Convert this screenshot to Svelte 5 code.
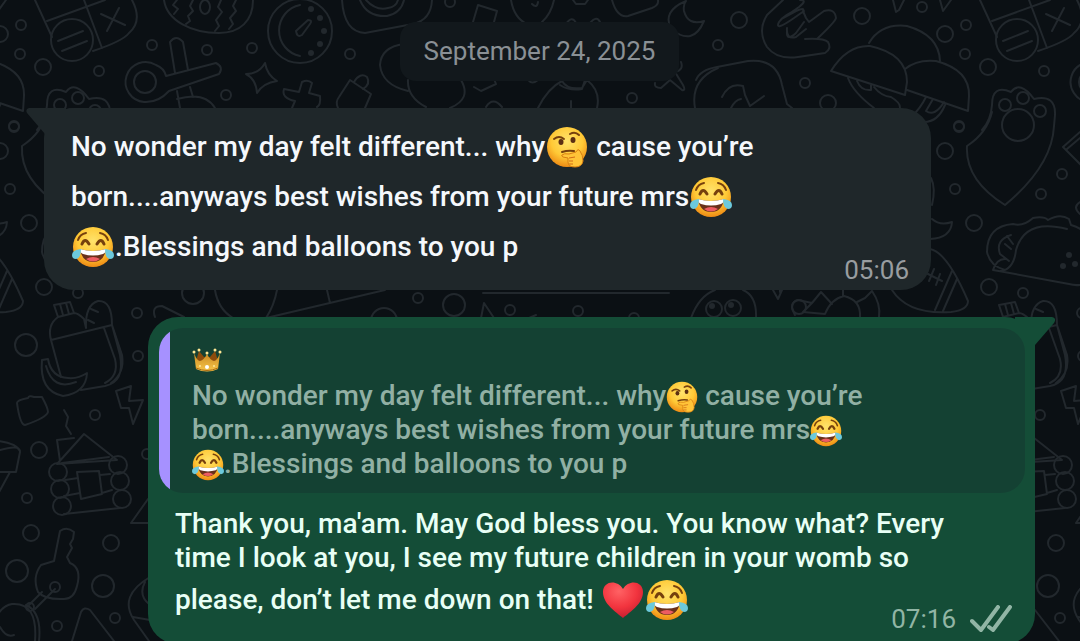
<script>
const received = {
  lines: ['No wonder my day felt different... why🤔 cause you’re', 'born....anyways best wishes from your future mrs😂', '😂.Blessings and balloons to you p'],
  time: '05:06',
}

const reply = {
  author: '👑',
  lines: [
    "Thank you, ma'am. May God bless you. You know what? Every",
    'time I look at you, I see my future children in your womb so',
    'please, don’t let me down on that! ❤😂',
  ],
  time: '07:16',
}

const dots = [
  [21, 25, 5], [0, 34, 8], [20, 54, 5], [43, 67, 8], [99, 71, 5], [152, 45, 5], [207, 50, 5],
  [252, 48, 5], [226, 95, 5], [350, 54, 5], [14, 126, 5], [450, 2, 5], [632, 98, 5], [718, 45, 5],
  [739, 20, 8], [862, 16, 8], [922, 7, 5], [805, 83, 5], [828, 103, 8], [959, 127, 5], [945, 151, 8],
  [955, 189, 5], [974, 223, 8], [117, 174, 5], [96, 194, 5], [989, 287, 8], [1023, 293, 5],
  [193, 293, 11], [137, 313, 5], [138, 356, 5], [26, 345, 11], [95, 415, 5], [39, 450, 8],
  [147, 454, 5], [27, 498, 5], [31, 533, 8], [111, 543, 8], [17, 571, 11], [103, 586, 11],
  [57, 626, 5], [115, 618, 5], [418, 298, 5], [454, 305, 11], [384, 321, 13], [510, 310, 5],
  [578, 311, 5], [634, 318, 5], [799, 307, 7], [714, 309, 8], [733, 308, 8],
]

// keeps the emoji as separate parts so they can be drawn
function split(line) {
  return line.split(/(🤔|😂|❤|👑)/u).filter(Boolean)
}
</script>

{#snippet emoji(name)}
  {#if name === '😂'}
    <svg class="emoji" viewBox="0 0 42 42" role="img" aria-label={name}>
      <circle cx="21" cy="21" r="20" fill="url(#face)" />
      <path d="M6 14Q8 8 14 7M28 7Q34 8 36 14" class="brow" />
      <path d="M10 18Q13 11 17 18M25 18Q29 11 32 18" class="brow wide" />
      <path d="M8 23Q21 27 34 23Q32 36 21 36T8 23Z" fill="#68301a" />
      <path d="M8 23Q21 27 34 23Q34 27 31 28Q21 31 11 28Q8 27 8 23Z" fill="#fff" />
      <path d="M14 33Q21 29 28 33Q21 38 14 33Z" fill="#ed5c62" />
      <path d="M9 23Q0 24 0 29Q0 33 4 33Q9 32 9 23ZM33 23Q42 24 42 29Q42 33 38 33Q33 32 33 23Z" fill="#6cc9dc" />
    </svg>
  {:else if name === '🤔'}
    <svg class="emoji" viewBox="0 0 42 42" role="img" aria-label={name}>
      <circle cx="21" cy="21" r="20" fill="url(#face)" />
      <path d="M8 13Q13 9 18 13M24 8Q29 5 33 9" class="brow" />
      <ellipse cx="15" cy="16" rx="2.5" ry="3" fill="#5b2e12" />
      <ellipse cx="27" cy="14" rx="2.5" ry="3" fill="#5b2e12" />
      <path d="M16 26Q22 24 28 25" class="brow" />
      <path
        d="M16 29Q18 27 23 28L30 26Q32 22 34 25Q37 29 37 35Q36 41 29 41Q22 41 22 36V32L17 31Q15 30 16 29Z"
        fill="#ffc438"
        stroke="#d77e12"
      />
      <path d="M23 32L29 31M23 35H27M23 38H27" stroke="#d06b17" />
    </svg>
  {:else if name === '❤'}
    <svg class="emoji" viewBox="0 0 42 42" role="img" aria-label={name}>
      <path d="M21 39C14 33 1 25 1 13C1 2 15 0 21 10C27 0 41 2 41 13C41 25 28 33 21 39Z" fill="url(#love)" />
    </svg>
  {:else}
    <svg class="emoji crown" viewBox="0 0 30 26" role="img" aria-label={name}>
      <path d="M4 14L7 4L12 10H18L23 4L26 14Z" fill="#8c4c0c" />
      <path d="M2 6Q5 14 8 14Q12 13 15 7Q18 13 22 14Q25 14 28 6L26 22Q15 27 4 22Z" fill="url(#gold)" />
      <path d="M4 21Q15 26 26 21" fill="none" stroke="#a96c16" />
      <g fill="#ffe794">
        <circle cx="2" cy="5" r="1.5" />
        <circle cx="7" cy="3" r="1.5" />
        <circle cx="15" cy="6" r="1.5" />
        <circle cx="23" cy="3" r="1.5" />
        <circle cx="28" cy="5" r="1.5" />
        <circle cx="8" cy="19" r="1" />
        <circle cx="22" cy="19" r="1" />
      </g>
      <circle cx="15" cy="20" r="2" fill="#fff" />
    </svg>
  {/if}
{/snippet}

{#snippet text(lines)}
  {#each lines as line}
    <span class="line">{#each split(line) as part}{#if /^[🤔😂❤👑]$/u.test(part)}{@render emoji(part)}{:else}{part}{/if}{/each}</span>
  {/each}
{/snippet}

<main class="chat">
  <svg class="wallpaper" aria-hidden="true">
    <defs>
      <radialGradient id="face" cx="50%" cy="35%" r="65%">
        <stop offset="0" stop-color="#ffe36c" />
        <stop offset="0.6" stop-color="#ffc936" />
        <stop offset="1" stop-color="#ee8b14" />
      </radialGradient>
      <radialGradient id="love" cx="40%" cy="25%" r="75%">
        <stop offset="0" stop-color="#ff6264" />
        <stop offset="0.6" stop-color="#f2343e" />
        <stop offset="1" stop-color="#c91f31" />
      </radialGradient>
      <linearGradient id="gold" x2="0" y2="1">
        <stop offset="0" stop-color="#c98a22" />
        <stop offset="1" stop-color="#f8c64a" />
      </linearGradient>
      <g id="doodles">
        {#each dots as [cx, cy, r]}
          <circle {cx} {cy} {r} />
        {/each}
        <!-- game card -->
        <path d="M35 0L52 37M47 21L105 0M84 0L102 48M132 0Q143 21 129 33Q123 41 93 51M101 14L125 25M119 8L107 31" />
        <circle cx="72" cy="40" r="21" />
        <path d="M58 41L83 31M62 51L87 41" />
        <!-- egg -->
        <path d="M164 0C167 21 192 33 219 33C240 33 253 21 253 0" />
        <path d="M177 0L173 5L178 9L174 14M193 0L190 6L193 11L188 16L190 21L186 24M221 0L218 7L222 12L216 20L219 26L215 31M236 0L233 6L236 11L230 18L233 24L229 29" />
        <ellipse cx="205" cy="7" rx="5" ry="7" />
        <!-- timer -->
        <circle cx="300" cy="31" r="32" />
        <path d="M300 5A26 26 0 0 0 300 56M296 31L308 20Q313 20 310 24L302 35Q297 38 296 31" />
        <g class="solid">
          <circle cx="311" cy="9" r="3" />
          <circle cx="320" cy="18" r="3" />
          <circle cx="324" cy="31" r="3" />
          <circle cx="320" cy="44" r="3" />
          <circle cx="311" cy="53" r="3" />
        </g>
        <!-- keys and stars -->
        <path d="M166 76L216 63Q224 67 219 74L169 91Q158 103 144 102A20 20 0 1 1 156 65Q164 68 166 76M175 73L170 42Q176 34 183 42L188 70M177 91L180 108M190 87L193 97M177 99Q205 91 215 108" />
        <circle cx="145" cy="82" r="11" />
        <path d="M265 63Q267 75 277 81Q263 83 257 93Q256 79 246 74Q259 74 265 63Z" />
        <path d="M302 82Q308 79 312 83L309 93L320 96Q321 105 317 107M292 108L295 101Q281 98 284 89L299 92L302 82M338 108Q335 102 339 97L350 80L371 94L365 108M354 82Q360 72 367 77Q371 84 363 89" />
        <!-- camera, balloon and moon -->
        <path d="M342 0Q344 32 365 33L413 24Q431 20 432 0M360 0Q367 17 387 16Q401 13 404 0M366 0Q376 11 388 8Q396 7 398 0M473 22L478 5L497 11L494 22M511 0Q514 18 527 24M554 0Q551 14 542 22M532 4Q537 9 538 2M573 0L576 4H585L588 0M566 24Q572 15 576 23M590 23Q597 15 600 22" />
        <path d="M612 0Q617 18 628 16L652 8Q659 5 658 0M686 1Q662 11 671 29Q693 47 704 21Q688 26 684 11Q683 4 686 1M404 44Q381 47 380 65Q382 85 408 91M408 80Q407 97 426 107M461 80Q472 99 450 108M474 87L481 91L496 84L494 79M538 108Q548 88 562 81Q567 90 582 88L587 80Q601 91 597 108M560 85Q569 91 582 89L585 80M571 101V108M655 83Q654 88 661 88L670 80L682 90Q686 91 683 85L675 72Q684 70 681 62M695 108Q690 80 718 68" />
        <path d="M486 107Q493 96 502 107M528 80Q532 85 538 80" />
        <!-- hand -->
        <path d="M783 0L767 15Q757 31 767 47Q777 60 798 57L825 53Q832 49 828 42Q824 38 805 39M783 18L799 7Q808 0 800 0M783 18L796 11Q805 7 803 11L806 18L809 22L824 11Q835 8 836 18Q835 22 817 39M804 11L794 18Q774 32 779 22Q785 14 796 11M804 22L796 33Q786 42 787 31M806 29L796 37Q786 40 787 28" />
        <path d="M893 0L896 12L899 10L904 0M940 0L943 11L951 0M696 80Q700 70 717 67L748 61Q777 58 782 85L787 104L792 108M722 97Q729 82 743 86L745 95L750 106L764 96M731 108Q735 100 741 99" />
        <!-- mushrooms -->
        <path d="M869 43Q881 23 907 26Q939 35 940 61M831 71Q847 45 870 46Q907 54 907 82L905 95ZM905 69Q917 59 936 61Q970 70 969 96L968 111L907 90M848 78Q853 92 874 108M857 81Q861 91 871 90V85M874 87Q881 96 891 97Q901 103 900 108M926 97Q920 109 912 116M933 99L926 111Q935 117 944 102M945 105Q938 122 924 122" />
        <!-- paw -->
        <path d="M37 130Q46 120 47 105Q47 84 66 92Q75 80 89 99Q111 94 110 115L109 126Q107 166 60 205Q20 180 22 146Q42 133 47 112" />
        <circle cx="60" cy="105" r="6" />
        <circle cx="78" cy="98" r="6" />
        <circle cx="95" cy="111" r="6" />
        <circle cx="73" cy="125" r="16" />
        <path d="M135 132L118 147L137 166M135 138L122 149M135 202Q127 207 135 214" />
        <!-- taco -->
        <path d="M60 270Q45 266 42 252Q42 226 68 224Q78 227 88 218Q99 216 103 220Q115 213 124 219L126 225Q142 229 148 246Q154 269 142 282Q135 287 124 284L48 270M56 271Q69 269 71 250Q80 218 122 229M66 235Q50 240 55 254L64 261M48 270Q52 258 61 259M60 244L66 249M62 236L68 244" />
        <g class="solid">
          <circle cx="118" cy="266" r="3" />
          <circle cx="124" cy="255" r="3" />
          <circle cx="130" cy="264" r="3" />
        </g>
        <path d="M931 178Q936 188 932 205M932 219Q940 226 952 222Q951 238 930 239" />
        <!-- football -->
        <path d="M930 249Q947 252 968 301Q968 310 951 312Q908 315 892 290M952 271L935 310M957 279L943 311M926 273L942 281M934 269L929 281M940 274L936 285" />
        <!-- beetle -->
        <path d="M795 315Q788 303 798 300L812 303L803 312L825 314Q831 299 844 296Q861 300 860 317M812 303L821 292L832 304M843 290V296M865 298L872 291Q881 304 879 317M865 298L857 302M780 290V292" />
        <!-- shopping bag -->
        <path d="M54 305L70 302L74 313L58 317ZM60 304L63 315M66 303L69 314M58 317Q47 325 51 340L61 377M51 340L112 325M86 328L84 319Q78 313 74 313M86 328Q85 305 98 301Q112 300 112 325L120 355Q125 382 105 386L81 390M104 328L115 359Q119 376 105 383M112 325L122 355Q125 373 111 383M91 309L98 312M88 320L94 323" />
        <path d="M42 360L48 359Q51 377 68 378Q78 379 87 373Q86 393 63 396Q39 391 42 360M46 366Q53 391 76 382" />
        <path d="M17 403Q17 400 28 398Q29 395 34 397L42 397Q48 408 48 412Q46 418 25 425Q20 425 17 403ZM64 410L68 417L66 426L71 434M116 391L131 386L129 401L143 400L133 424L129 408H121Z" />
        <!-- cabin -->
        <path d="M60 461L57 440L74 438M57 464L84 434L117 460ZM62 463L109 457M65 480L78 478M64 496L80 493M100 475L110 474M102 493L112 490M77 472L99 471L102 494L81 499ZM64 514L120 508" />
        <circle cx="58" cy="472" r="9" />
        <circle cx="60" cy="489" r="9" />
        <circle cx="62" cy="506" r="9" />
        <circle cx="118" cy="465" r="9" />
        <circle cx="120" cy="481" r="9" />
        <circle cx="122" cy="499" r="9" />
        <path d="M-20 450H0Q20 444 20 452L16 472H-20M10 472L-2 494M-20 440Q15 440 20 451M148 499L131 523H150" />
        <!-- car key -->
        <path d="M54 561L60 531Q67 526 74 532L73 539L70 544L72 548L67 557L70 563Q82 568 77 586Q74 599 64 599Q45 600 38 592Q32 577 41 565ZM42 592L28 606M55 589L35 609" />
        <circle cx="55" cy="587" r="5" />
        <circle cx="30" cy="607" r="4" />
        <path d="M-9 641Q-6 607 12 604Q38 602 35 641M26 605Q42 612 39 641M0 627Q6 638 14 635M72 641L81 612Q84 606 90 610L114 641M150 577Q118 596 134 620L149 641M145 582Q138 595 149 604M133 617L150 620" />
        <!-- shapes showing between the messages -->
        <path d="M215 290Q218 309 233 318M277 290Q274 306 266 318M266 318L385 290M327 290L330 303M155 317Q151 306 162 306L184 317M483 293H669M481 318L484 303L494 318M529 318L536 315M691 318Q699 296 715 290M743 290Q757 296 756 318M773 290L778 299L782 290" />
        <g class="solid">
          <circle cx="712" cy="306" r="3" />
          <circle cx="731" cy="305" r="3" />
        </g>
      </g>
    </defs>
    <use href="#doodles" x="-945" />
    <use href="#doodles" />
    <use href="#doodles" x="945" />
  </svg>

  <time class="date" datetime="2025-09-24">September 24, 2025</time>

  <article class="bubble received">
    <svg class="tail" viewBox="0 0 40 40" aria-hidden="true">
      <path d="M40 0H3Q-1 1 1 5L19 26V40H40Z" />
    </svg>
    <p class="message spaced">{@render text(received.lines)}</p>
    <footer class="meta"><time>{received.time}</time></footer>
  </article>

  <article class="bubble sent">
    <svg class="tail" viewBox="0 0 40 40" aria-hidden="true">
      <path d="M0 0H37Q42 1 39 6L20 28V40H0Z" />
    </svg>
    <blockquote class="quote">
      <div class="author">{@render emoji(reply.author)}</div>
      <p class="message">{@render text(received.lines)}</p>
    </blockquote>
    <p class="message body">{@render text(reply.lines)}</p>
    <footer class="meta">
      <time>{reply.time}</time>
      <svg class="ticks" viewBox="0 0 42 28" role="img" aria-label="Delivered">
        <path d="M2 16L11 25L28 2M19 22L23 25L40 2" />
      </svg>
    </footer>
  </article>
</main>

<style>
:global(body) {
  margin: 0;
  background: #0b1014;
}

.chat {
  position: relative;
  display: flex;
  flex-direction: column;
  box-sizing: border-box;
  height: 100vh;
  padding: 22px 45px 0 44px;
  overflow: hidden;
  font-family: Roboto, 'Noto Sans', sans-serif;
  font-size: 28px;
  line-height: 34px;
}

.wallpaper {
  position: absolute;
  inset: 0;
  width: 100%;
  height: 100%;
  fill: none;
  stroke: #22282d;
  stroke-width: 2;
  stroke-linecap: round;
  stroke-linejoin: round;
}

.solid {
  fill: #22282d;
  stroke: none;
}

.date {
  position: relative;
  flex: none;
  align-self: center;
  margin-bottom: 27px;
  padding: 13px 24px;
  border-radius: 16px;
  background: #12181c;
  color: #8a9095;
  font-size: 26px;
  line-height: 33px;
}

.bubble {
  position: relative;
  flex: none;
  box-sizing: border-box;
  width: calc(100% - 104px);
  border-radius: 30px;
  font-weight: 500;
}

.received {
  align-self: flex-start;
  margin-bottom: 27px;
  padding: 14px 22px 4px 27px;
  background: #1f272a;
  color: #f5f8fc;
}

.sent {
  align-self: flex-end;
  padding: 11px 10px 9px 11px;
  background: #144d37;
  color: #e8fff5;
}

.tail {
  position: absolute;
  top: 0;
  width: 40px;
  height: 40px;
}

.received .tail {
  left: -18px;
  fill: #1f272a;
}

.sent .tail {
  right: -20px;
  fill: #144d37;
}

.message {
  margin: 0;
}

.line {
  display: block;
  white-space: nowrap;
}

.spaced {
  line-height: 50px;
}

.quote {
  position: relative;
  margin: 0 0 14px;
  padding: 14px 20px 12px 33px;
  border-radius: 24px;
  background: linear-gradient(to right, #a691ff 11px, #144133 11px);
  color: #91b0a4;
}

.author {
  display: flex;
  align-items: center;
  height: 37px;
}

.body {
  padding-left: 16px;
}

.body .line:last-child {
  line-height: 50px;
}

.meta {
  display: flex;
  justify-content: flex-end;
  align-items: center;
  gap: 14px;
  margin-top: -18px;
  color: #989da0;
  font-size: 26px;
  font-weight: 400;
  line-height: 32px;
}

.sent .meta {
  margin-top: -22px;
  padding-right: 13px;
  color: #91b5a5;
}

.emoji {
  width: 42px;
  height: 42px;
  margin: -10px 1px -6px;
  vertical-align: middle;
}

.quote .emoji {
  width: 32px;
  height: 32px;
  margin: -5px 0 -3px;
}

.quote .crown {
  width: 30px;
  height: 26px;
}

.brow {
  fill: none;
  stroke: #76400d;
  stroke-width: 2;
  stroke-linecap: round;
}

.wide {
  stroke-width: 3;
}

.ticks {
  width: 42px;
  height: 28px;
  fill: none;
  stroke: #91b5a5;
  stroke-width: 4;
  stroke-linecap: round;
  stroke-linejoin: round;
}
</style>
